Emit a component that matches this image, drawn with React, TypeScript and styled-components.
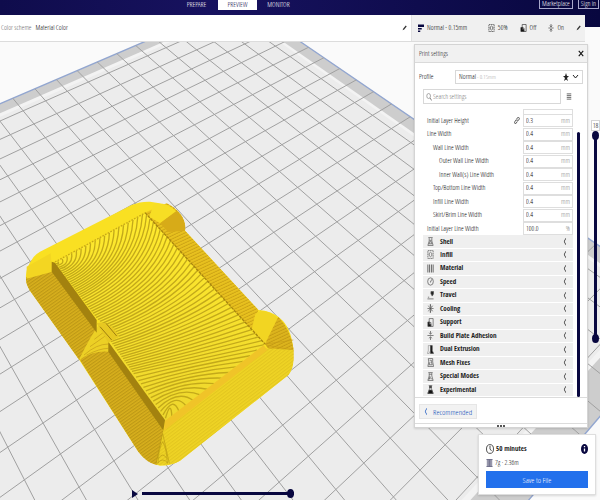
import React from "react";
import styled, { createGlobalStyle } from "styled-components";

const navy = "#08073f";
const blue = "#2270ec";

const GlobalStyle = createGlobalStyle`
  * { box-sizing: border-box; }
  body {
    margin: 0;
    background: #fafafa;
    color: #000;
    font: 7px/10px "Open Sans Condensed Light", "Open Sans", sans-serif;
  }
  button, input, select { font: inherit; color: inherit; margin: 0; padding: 0; border-radius: 0; }
  button { cursor: pointer; }
`;

const Page = styled.div`
  position: relative;
  display: flex;
  flex-direction: column;
  min-height: 100vh;
  overflow: hidden;
  isolation: isolate;
`;

const Scene = styled.svg`
  position: absolute;
  inset: 0;
  z-index: -1;
  width: 100%;
  height: 100%;
`;

const Header = styled.header`
  display: grid;
  grid-template-columns: 1fr auto 1fr;
  align-items: start;
  height: 27px;
  padding-right: 1px;
  background: linear-gradient(90deg, #0f0c4c, #17125f 35%, #08073f);
  color: #fff;
`;

const Stages = styled.nav`
  grid-column: 2;
  display: flex;
  margin-right: 124px;
`;

const Stage = styled.button<{ $active?: boolean }>`
  min-width: 39px;
  height: 10px;
  margin: 0 1px;
  border: 0;
  background: ${(p) => (p.$active ? "#fff" : "transparent")};
  color: ${(p) => (p.$active ? "#0b0748" : "#fff")};
  line-height: 8px;
`;

const Account = styled.div`
  grid-column: 3;
  justify-self: end;
  display: flex;
  gap: 5px;
`;

const OutlineButton = styled.button`
  height: 9px;
  padding: 0 2px;
  border: 1px solid #a9a8cb;
  border-top: 0;
  background: transparent;
  color: #fff;
  line-height: 8px;
`;

const Bar = styled.div`
  display: grid;
  grid-template-columns: 1fr 174px;
  height: 27px;
  margin: -12px 15px 0 0;
  border-bottom: 1px solid #dcdcdc;
  background: #fff;
`;

const ViewMenu = styled.div`
  display: flex;
  align-items: center;
  gap: 4px;
  padding: 0 4px 0 1px;
`;

const Muted = styled.span`
  color: #666;
`;

const Spacer = styled.span`
  flex: 1;
`;

const Summary = styled.div`
  display: flex;
  align-items: center;
  gap: 3px;
  padding: 0 4px 0 6px;
  border-left: 1px solid #e2e2e2;
  background: #f0f0f0;
`;

const SummaryItem = styled.span`
  display: flex;
  align-items: center;
  gap: 3px;
  margin-right: 9px;
`;

const IconButton = styled.button`
  display: grid;
  place-items: center;
  border: 0;
  background: transparent;
`;

const Work = styled.main`
  flex: 1;
  display: grid;
  grid-template-columns: 1fr;
  grid-template-rows: 1fr;
  & > * { grid-area: 1 / 1; }
`;

const Panel = styled.section`
  align-self: start;
  justify-self: end;
  width: 174px;
  margin: 2px 12px 0 0;
  border: 1px solid #d4d4d4;
  background: #fff;
  box-shadow: 0 1px 2px #0002;
`;

const PanelHead = styled.div`
  display: flex;
  align-items: center;
  justify-content: space-between;
  height: 18px;
  padding: 0 3px 0 4px;
  border-bottom: 1px solid #dadada;
  background: #f1f1f1;
  color: #222;
`;

const ProfileRow = styled.div`
  display: grid;
  grid-template-columns: 36px 1fr;
  align-items: center;
  margin: 7px 4px 0;
`;

const SelectWrap = styled.span`
  display: grid;
  align-items: center;
  height: 14px;
  border: 1px solid #d8d8d8;
  & > * { grid-area: 1 / 1; }
  & > svg { justify-self: end; margin-right: 3px; pointer-events: none; }
  & > span { margin-left: 21px; color: #aaa; font-size: 6px; pointer-events: none; }
`;

const ProfileSelect = styled.select`
  appearance: none;
  width: 100%;
  height: 100%;
  padding-left: 3px;
  border: 0;
  background: transparent;
`;

const SearchRow = styled.div`
  display: grid;
  grid-template-columns: 138px 1fr;
  align-items: center;
  margin: 5px 10px 5px 8px;
`;

const SearchBox = styled.label`
  display: flex;
  align-items: center;
  gap: 1px;
  height: 15px;
  padding-left: 2px;
  border: 1px solid #d8d8d8;
`;

const SearchInput = styled.input`
  flex: 1;
  min-width: 0;
  border: 0;
  background: transparent;
  outline: 0;
  &::placeholder { color: #777; }
`;

const ListArea = styled.div`
  display: grid;
  grid-template-columns: 150px 3px;
  gap: 4px;
  margin-left: 8px;
`;

const List = styled.div`
  display: grid;
  grid-template-rows: 5px;
  grid-auto-rows: 1fr;
  height: 288px;
`;

const ClippedRow = styled.div`
  display: grid;
  grid-template-columns: 1fr 50px;
  align-items: end;
  overflow: hidden;
  height: 5px;
`;

const Field = styled.label<{ $depth: number }>`
  display: grid;
  grid-template-columns: 1fr 9px 50px;
  align-items: center;
  padding-left: ${(p) => 4 + p.$depth * 6}px;
`;

const ValueBox = styled.span`
  grid-column: -2;
  display: flex;
  align-items: center;
  height: 13px;
  padding: 0 2px;
  border: 1px solid #dedede;
  color: #888;
`;

const ValueInput = styled.input`
  flex: 1;
  min-width: 0;
  border: 0;
  background: transparent;
  color: #000;
  outline: 0;
`;

const Category = styled.button`
  display: grid;
  grid-template-columns: 13px 1fr 7px;
  align-items: center;
  margin-bottom: 1px;
  padding: 0 3px 0 4px;
  border: 0;
  background: #efefef;
  color: #1c1c1c;
  font-family: "Open Sans Condensed", "Open Sans", sans-serif;
  font-weight: bold;
  text-align: left;
`;

const ScrollThumb = styled.span`
  margin-top: 23px;
  border-radius: 2px;
  background: ${navy};
`;

const PanelFoot = styled.div`
  padding: 6px 4px 4px;
  border-top: 1px solid #dcdcdc;
`;

const Recommended = styled.button`
  display: flex;
  align-items: center;
  gap: 5px;
  height: 15px;
  min-width: 51px;
  padding: 0 4px;
  border: 1px solid #e6e6e6;
  background: #f2f2f2;
  color: #0b49b8;
  font-size: 8px;
`;

const Grip = styled.div`
  display: grid;
  place-items: center;
  height: 4px;
  border-top: 1px solid #dcdcdc;
`;

const SaveCard = styled.section`
  align-self: end;
  justify-self: end;
  display: grid;
  gap: 3px;
  width: 118px;
  margin: 0 4px 5px 0;
  padding: 8px 7px 6px;
  border: 1px solid #dedede;
  background: #fff;
  box-shadow: 0 1px 2px #0002;
`;

const InfoRow = styled.div`
  display: flex;
  align-items: center;
  gap: 2px;
  height: 11px;
`;

const Strong = styled.strong`
  color: #1c1c1c;
  font-family: "Open Sans Condensed", "Open Sans", sans-serif;
`;

const SaveButton = styled.button`
  height: 17px;
  border: 0;
  background: ${blue};
  color: #fff;
  font-size: 8px;
`;

const LayerControl = styled.div`
  align-self: start;
  justify-self: end;
  display: grid;
  justify-items: center;
  width: 9px;
  margin-top: 78px;
`;

const LayerValue = styled.output`
  width: 9px;
  height: 11px;
  border: 1px solid #d4d4d4;
  background: #fff;
  line-height: 9px;
  text-align: center;
`;

const VerticalTrack = styled.div`
  display: grid;
  justify-items: center;
  height: 212px;
  & > * { grid-area: 1 / 1; }
  &::before { content: ""; grid-area: 1 / 1; width: 3px; margin: 5px 0; background: ${navy}; }
`;

const Range = styled.input<{ $vertical?: boolean }>`
  appearance: none;
  background: transparent;
  pointer-events: none;
  ${(p) =>
    p.$vertical
      ? "writing-mode: vertical-lr; direction: rtl; width: 9px; height: 100%;"
      : "width: 100%; height: 9px;"}
  &::-webkit-slider-thumb {
    appearance: none;
    pointer-events: auto;
    width: 7px;
    height: 9px;
    border-radius: 50%;
    background: ${navy};
  }
`;

const Player = styled.div`
  align-self: end;
  display: grid;
  grid-template-columns: 7px minmax(80px, 152px);
  align-items: center;
  gap: 4px;
  margin: 0 0 2px 131px;
`;

const PathTrack = styled.div`
  display: grid;
  align-items: center;
  & > * { grid-area: 1 / 1; }
  &::before { content: ""; grid-area: 1 / 1; height: 3px; background: ${navy}; }
`;

/* ---------- icons ---------- */

const paths: Record<string, React.ReactNode> = {
  Shell: <path d="M3 1h10M5 2v5L2 15h12L11 7V2M7 5v3l-2 4h6L9 8V5" />,
  Infill: <><path d="M2 1h12v14H2z" strokeDasharray="3 1" /><path d="M5 6l3-2 3 2v4l-3 2-3-2z" /></>,
  Material: <path d="M2 1v14M6 1v14M10 1v14M14 1v14" strokeWidth="2" />,
  Speed: <><circle cx="8" cy="8" r="6.5" /><path d="M8 9l3-5M7 9h2" /></>,
  Travel: <><path d="M1 14h14M2 11h3" /><path d="M9 1h6v4l-3 4-3-4z" fill="#222" /></>,
  Cooling: <path d="M8 0v16M1 8h14M3 3l10 10M13 3L3 13M6 2l4 2M6 14l4-2" />,
  Support: <><path d="M5 1h9v14H9V8H5z" /><path d="M2 7h4v4h3v4H2z" fill="#111" /></>,
  "Build Plate Adhesion": <path d="M8 0v5M5 3l3 3 3-3M1 8h14M8 16v-5M5 13l3-3 3 3" />,
  "Dual Extrusion": <><path d="M3 1h5v9l-3 5H1l2-5z" strokeWidth=".8" /><path d="M8 1h4v9l3 5H8z" fill="#111" /></>,
  "Mesh Fixes": <path d="M3 1h10v6l2 8H2l2-8zM6 4h4v3l2 5H5l2-5" />,
  "Special Modes": <path d="M3 1h10M5 2v5L2 15h12L11 7V2M5 4h6M7 7l-2 6 3-3 3 3" />,
  Experimental: <><path d="M4 1h8M6 2v4L2 15h12L10 6V2" /><path d="M5 9h6l3 6H2zM6 2h4v3H6z" fill="#111" /></>,
  pencil: <path d="M2 14l2-5 8-8 3 3-8 8z" fill="#333" strokeWidth="0" />,
  layers: <path d="M0 1h16v5H0zM0 8h10v3H0zM0 13h6v3H0z" fill={navy} strokeWidth="0" />,
  close: <path d="M2 2l12 12M14 2L2 14" strokeWidth="3" />,
  search: <><circle cx="7" cy="6" r="5" /><path d="M11 10l4 5" strokeWidth="2" /></>,
  menu: <path d="M2 2h12M2 6h12M2 10h12M2 14h12" strokeWidth="1.8" />,
  link: <path d="M7 9l3-3M6 6l4-5c3-1 5 1 4 4l-4 4M9 10l-4 5c-3 1-4-1-3-4l3-4" strokeWidth="2" />,
  left: <path d="M11 1L5 8l6 7" strokeWidth="2.6" />,
  clock: <><circle cx="8" cy="8" r="7" /><path d="M8 3v5l3 3" /></>,
  info: <><circle cx="8" cy="8" r="8" fill={navy} strokeWidth="0" /><path d="M8 7v5M8 3v2" stroke="#fff" strokeWidth="3" /></>,
  spool: <path d="M1 1h14M1 15h14M3 1v14M6 1v14M8 1v14M10 1v14M13 1v14" strokeWidth="1.6" />,
};

const Icon = ({ name, w = 8, h = 9, color = "#333" }: { name: string; w?: number; h?: number; color?: string }) => (
  <svg width={w} height={h} viewBox="0 0 16 16" preserveAspectRatio="none" fill="none" stroke={color} strokeWidth="1.4" aria-hidden="true">
    {paths[name]}
  </svg>
);

/* ---------- build plate and sliced part ---------- */

type P = [number, number];
const vpB: P = [-1401, -1568];
const vpA: P = [4098, -1568];
const through = (v: P, x: number): string => {
  const far = 2.2;
  const near = 0.9;
  return [far, near].map((t) => `M${x} 0L${v[0] + (x - v[0]) * t} ${v[1] - v[1] * t}`).join("");
};
const cross = (a: number, b: number): P => {
  const d1: P = [a - vpA[0], -vpA[1]];
  const d2: P = [b - vpB[0], -vpB[1]];
  const t = ((b - a) * d2[1]) / (d1[0] * d2[1] - d1[1] * d2[0]);
  return [a + d1[0] * t, d1[1] * t];
};
const quad = (a0: number, a1: number, b0: number, b1: number) =>
  [cross(a0, b0), cross(a0, b1), cross(a1, b1), cross(a1, b0)].map((p) => p.join(",")).join(" ");

const gridLines = [
  ...Array.from({ length: 40 }, (_, i) => through(vpB, -106 + 82.4 * (i - 28))),
  ...Array.from({ length: 21 }, (_, i) => through(vpA, 550 + 104.8 * i)),
].join("");

const mix = (a: P, b: P, t: number): P => [a[0] + (b[0] - a[0]) * t, a[1] + (b[1] - a[1]) * t];
const strand = (s: number) => {
  let p: P, q: P, c: P;
  if (s < 0.28) {
    const t = s / 0.28;
    p = mix([165, 668], [240, 775], t);
    q = mix([165, 668], [435, 520], t);
    c = mix([175, 672], [425, 680], t);
  } else if (s < 0.8) {
    const t = (s - 0.28) / 0.52;
    p = mix([240, 775], [400, 1000], t);
    q = mix([435, 520], [795, 912], t);
    c = mix([425, 680], [600, 955], t);
  } else {
    const t = (s - 0.8) / 0.2;
    p = mix([400, 1000], [500, 1140], t);
    q = mix([795, 912], [505, 1140], t);
    c = mix([600, 955], [510, 1080], t);
  }
  return `M${p}Q${c} ${q}`;
};
const strands = Array.from({ length: 68 }, (_, i) => strand((i + 0.5) / 68)).join("");

const BuildPlate = () => (
  <Scene viewBox="0 -120 1800 1500" preserveAspectRatio="xMidYMid slice" aria-hidden="true">
    <defs>
      <clipPath id="plate"><polygon points={quad(445, 2762, -1150, 894)} /></clipPath>
      <clipPath id="top"><path d="M165 668L435 520L795 912L495 1142L325 905L350 890L290 835Z" /></clipPath>
      <pattern id="fine" width="8" height="8" patternUnits="userSpaceOnUse" patternTransform="rotate(-35)">
        <path d="M0 2h8" stroke="#967409" strokeWidth="2.6" opacity=".55" />
      </pattern>
      <pattern id="rib" width="9" height="9" patternUnits="userSpaceOnUse" patternTransform="rotate(-25)">
        <path d="M0 3h9" stroke="#a97c08" strokeWidth="2.6" opacity=".5" />
      </pattern>
      <pattern id="front" width="8" height="8" patternUnits="userSpaceOnUse" patternTransform="rotate(-37)">
        <path d="M0 2h8" stroke="#c4a30f" strokeWidth="2" opacity=".5" />
      </pattern>
      <linearGradient id="topFill" x1="0" y1="0" x2="0" y2="1">
        <stop offset="0" stopColor="#ffea2e" /><stop offset="1" stopColor="#eed72d" />
      </linearGradient>
    </defs>
    <rect y="-120" width="1800" height="1500" fill="#fafafa" />
    <polygon points={quad(445, 2762, -1150, 894)} fill="#cdcdcd" stroke="#92a6d0" strokeWidth="4" />
    <polygon points={quad(503, 2669, -1150, 842)} fill="#f3f3f3" />
    <polygon points={quad(525, 2655, -1150, 830)} fill="#ececec" />
    <g clipPath="url(#plate)"><path d={gridLines} stroke="#a0a0a0" strokeWidth="3" fill="none" /></g>

    <path
      d="M95 660Q80 680 78 705Q76 730 90 752L238 960L415 1235Q440 1268 480 1277Q515 1277 540 1262L865 1005Q880 985 880 960V925Q872 860 840 835Q815 812 775 810L555 572Q558 540 530 515Q500 490 450 485Q420 484 395 495L120 635Q103 645 95 660Z"
      fill="#f9e022"
    />
    <path d="M435 518L500 490Q560 520 555 572L775 810L755 870L795 912L780 915Z" fill="#e8c11f" />
    <path d="M435 518L500 490Q560 520 555 572L775 810L755 870L795 912L780 915Z" fill="url(#rib)" />
    <path d="M448 530L462 490Q505 487 530 515L480 550Z" fill="#f7de24" />
    <path d="M480 550L530 512Q560 540 555 572L505 576Z" fill="#d7ab18" />
    <path d="M755 870L765 825Q778 806 810 818Q870 850 878 920L795 912Z" fill="#f2d522" />
    <path d="M795 912L835 830Q872 870 880 925V960L865 1005Z" fill="#dcb41d" />
    <path d="M795 912L835 830Q872 870 880 925V960L865 1005Z" fill="url(#rib)" />
    <path d="M795 912Q850 905 880 900M798 915Q850 925 880 930M800 920Q850 945 876 965" stroke="#c69c16" strokeWidth="2" fill="none" />

    <path d="M78 712Q110 700 155 688L290 875L290 900Q250 925 238 960L90 752Q76 730 78 712Z" fill="#d8b01d" />
    <path d="M78 712Q110 700 155 688L290 875L290 900Q250 925 238 960L90 752Q76 730 78 712Z" fill="url(#fine)" />
    <path d="M80 680L152 640L157 695L80 716Z" fill="#f3d622" />
    <path d="M240 960Q270 925 325 932L490 1172L470 1275Q440 1268 415 1235Z" fill="#d8b01d" />
    <path d="M240 960Q270 925 325 932L490 1172L470 1275Q440 1268 415 1235Z" fill="url(#fine)" />
    <path d="M238 958Q270 890 300 850L345 880L325 935Q285 930 238 958Z" fill="#ecd025" />
    <path d="M252 945Q290 912 325 912M260 945Q300 925 325 925M270 920L320 885M283 898L322 868" stroke="#c39a18" strokeWidth="2" fill="none" />
    <path d="M490 1172L795 925L880 930V960Q880 985 865 1005L540 1262Q515 1277 470 1275Z" fill="#efd425" />
    <path d="M490 1172L795 925L880 930V960Q880 985 865 1005L540 1262Q515 1277 470 1275Z" fill="url(#front)" />
    <path d="M494 1140L790 914L802 930L492 1172Z" fill="#f0c428" />
    <path d="M488 1180L468 1270M488 1180L508 1270M488 1205Q476 1225 474 1270M488 1205Q500 1225 502 1270M476 1255Q488 1235 500 1255M472 1270Q488 1250 504 1270" stroke="#b99a13" strokeWidth="2" fill="none" />
    <path d="M165 668L435 520L795 912L495 1142L325 905L350 890L290 835Z" fill="url(#topFill)" />
    <g clipPath="url(#top)"><path d={strands} stroke="#c3a91a" strokeWidth="4" fill="none" /></g>
    <path d="M155 665L165 668L290 840L290 878L155 695Z" fill="#a3820f" />
    <path d="M325 905L495 1140L490 1172L325 935Z" fill="#a3820f" />
    <path d="M290 850Q320 840 345 870L358 890L325 908Z" fill="#e7c822" />
    <path d="M300 860L335 900M318 850L350 888" stroke="#9f7f10" strokeWidth="3" />
    <path d="M435 518L795 912" stroke="#a8860f" strokeWidth="4" strokeDasharray="9 3" />
    <path d="M165 666L435 519" stroke="#c7a818" strokeWidth="4" strokeDasharray="5 4" />
  </Scene>
);

/* ---------- data ---------- */

const fields = [
  { label: "Initial Layer Height", value: "0.3", depth: 0, linked: true },
  { label: "Line Width", value: "0.4", depth: 0 },
  { label: "Wall Line Width", value: "0.4", depth: 1 },
  { label: "Outer Wall Line Width", value: "0.4", depth: 2 },
  { label: "Inner Wall(s) Line Width", value: "0.4", depth: 2 },
  { label: "Top/Bottom Line Width", value: "0.4", depth: 1 },
  { label: "Infill Line Width", value: "0.4", depth: 1 },
  { label: "Skirt/Brim Line Width", value: "0.4", depth: 1 },
  { label: "Initial Layer Line Width", value: "100.0", depth: 0, unit: "%" },
];

const categories = [
  "Shell", "Infill", "Material", "Speed", "Travel", "Cooling", "Support",
  "Build Plate Adhesion", "Dual Extrusion", "Mesh Fixes", "Special Modes", "Experimental",
];

export default function App() {
  return (
    <Page>
      <GlobalStyle />
      <BuildPlate />
      <Header>
        <Stages>
          <Stage>PREPARE</Stage>
          <Stage $active>PREVIEW</Stage>
          <Stage>MONITOR</Stage>
        </Stages>
        <Account>
          <OutlineButton>Marketplace</OutlineButton>
          <OutlineButton>Sign in</OutlineButton>
        </Account>
      </Header>
      <Bar>
        <ViewMenu>
          <Muted>Color scheme</Muted>
          <span>Material Color</span>
          <Spacer />
          <IconButton aria-label="Edit color scheme"><Icon name="pencil" w={5} h={6} /></IconButton>
        </ViewMenu>
        <Summary>
          <Icon name="layers" w={6} h={8} />
          <span>Normal - 0.15mm</span>
          <Spacer />
          <SummaryItem><Icon name="Infill" w={7} h={8} /> 50%</SummaryItem>
          <SummaryItem><Icon name="Support" w={7} h={8} /> Off</SummaryItem>
          <SummaryItem><Icon name="Build Plate Adhesion" w={6} h={8} /> On</SummaryItem>
          <IconButton aria-label="Edit print settings"><Icon name="pencil" w={5} h={6} /></IconButton>
        </Summary>
      </Bar>
      <Work>
        <Player>
          <IconButton aria-label="Play">
            <svg width="6" height="8" viewBox="0 0 6 8"><path d="M0 0l6 4-6 4z" fill={navy} /></svg>
          </IconButton>
          <PathTrack><Range type="range" aria-label="Path" defaultValue={100} /></PathTrack>
        </Player>
        <LayerControl>
          <LayerValue>18</LayerValue>
          <VerticalTrack>
            <Range $vertical type="range" aria-label="Top layer" defaultValue={100} />
            <Range $vertical type="range" aria-label="Bottom layer" defaultValue={0} />
          </VerticalTrack>
        </LayerControl>
        <Panel>
          <PanelHead>
            <span>Print settings</span>
            <IconButton aria-label="Close"><Icon name="close" w={6} h={7} color="#111" /></IconButton>
          </PanelHead>
          <ProfileRow>
            <label htmlFor="profile">Profile</label>
            <SelectWrap>
              <ProfileSelect id="profile" defaultValue="Normal"><option>Normal</option></ProfileSelect>
              <span>- 0.15mm</span>
              <svg width="16" height="8" viewBox="0 0 16 8">
                <path d="M3 0l1 3h2l-2 2 1 3-2-1.600L1 8l1-3-2-2h2z" fill="#222" />
                <path d="M10 2l2.500 3L15 2" fill="none" stroke="#222" />
              </svg>
            </SelectWrap>
          </ProfileRow>
          <SearchRow>
            <SearchBox>
              <Icon name="search" w={6} h={8} color="#777" />
              <SearchInput aria-label="Search settings" placeholder="Search settings" />
            </SearchBox>
            <IconButton aria-label="Setting visibility"><Icon name="menu" w={6} h={7} /></IconButton>
          </SearchRow>
          <ListArea>
            <List>
              <ClippedRow>
                <ValueBox />
              </ClippedRow>
              {fields.map((f) => (
                <Field key={f.label} $depth={f.depth}>
                  <span>{f.label}</span>
                  {f.linked && <Icon name="link" w={6} h={7} />}
                  <ValueBox>
                    <ValueInput defaultValue={f.value} />
                    {f.unit ?? "mm"}
                  </ValueBox>
                </Field>
              ))}
              {categories.map((c) => (
                <Category key={c}>
                  <Icon name={c} w={7} h={9} color="#555" />
                  {c}
                  <Icon name="left" w={4} h={7} />
                </Category>
              ))}
            </List>
            <ScrollThumb />
          </ListArea>
          <PanelFoot>
            <Recommended><Icon name="left" w={4} h={7} color="#2a63c4" />Recommended</Recommended>
          </PanelFoot>
          <Grip>
            <svg width="8" height="2" viewBox="0 0 8 2"><path d="M0 0h2v2H0zM3 0h2v2H3zM6 0h2v2H6z" fill="#555" /></svg>
          </Grip>
        </Panel>
        <SaveCard>
          <InfoRow>
            <Icon name="clock" w={8} h={10} color="#222" />
            <Strong>50 minutes</Strong>
            <Spacer />
            <IconButton aria-label="Print information"><Icon name="info" w={7} h={10} /></IconButton>
          </InfoRow>
          <InfoRow>
            <Icon name="spool" w={7} h={8} color="#557" />
            <span>7g · 2.36m</span>
          </InfoRow>
          <SaveButton>Save to File</SaveButton>
        </SaveCard>
      </Work>
    </Page>
  );
}
